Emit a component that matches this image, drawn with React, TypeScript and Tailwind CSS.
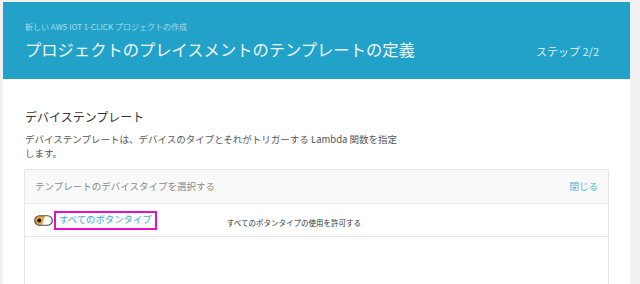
import * as React from "react";

const Toggle: React.FC = () => (
  <svg width="19" height="11" viewBox="0 0 19 11" className="shrink-0">
    <path d="M5.5 1 H11 L8 10 H5.5 A4.5 4.5 0 0 1 5.5 1 Z" fill="#f0a234" />
    <rect x="0.75" y="0.75" width="17.5" height="9.5" rx="4.75" fill="none" stroke="#4a4a4a" strokeWidth="1.2" />
    <circle cx="5.2" cy="5.5" r="2" fill="#111" />
  </svg>
);

export default function App() {
  return (
    <div
      className="w-[640px] h-[284px] overflow-hidden bg-[#f1f1f1] pt-[2px] pl-[3px]"
      style={{ fontFamily: '"Noto Sans CJK JP", "Noto Sans", sans-serif' }}
    >
      <div className="w-[627px] h-[282px] bg-white flex flex-col">
        {/* header */}
        <div className="h-[77px] bg-[#22a2c8] pl-[22px] pr-[31px] pt-[19px] shrink-0">
          <div className="text-[8px] leading-[12px] text-[#a9dcec]">
            新しい AWS IOT 1-CLICK プロジェクトの作成
          </div>
          <div className="mt-[5px] flex items-baseline justify-between">
            <h1 className="text-[16.3px] leading-[22px] text-[#eef8fb] font-normal">
              プロジェクトのプレイスメントのテンプレートの定義
            </h1>
            <span className="text-[11px] leading-[16px] text-[#dff1f7]">ステップ 2/2</span>
          </div>
        </div>

        {/* body */}
        <div className="flex-1 px-[21px] pt-[30px] flex flex-col">
          <h2 className="text-[12px] leading-[16px] text-[#333] pl-[1px]">デバイステンプレート</h2>
          <p className="mt-[7px] text-[9.5px] leading-[14px] text-[#555] pl-[1px]">
            デバイステンプレートは、デバイスのタイプとそれがトリガーする Lambda 関数を指定
            <br />
            します。
          </p>

          <div className="mt-[9px] flex-1 border border-b-0 border-[#e6e6e6] rounded-t-[2px] flex flex-col">
            <div className="h-[34px] bg-[#f9f9f9] flex items-center justify-between pl-[10px] pr-[10px] border-b border-[#ececec]">
              <span className="text-[9.5px] text-[#8a8a8a]">テンプレートのデバイスタイプを選択する</span>
              <span className="text-[9.5px] text-[#4db3d9]">閉じる</span>
            </div>
            <div className="h-[33px] flex items-center pl-[9px] border-b border-[#e6e6e6]">
              <Toggle />
              <div className="ml-[1px] h-[19px] border-2 border-[#e312c6] flex items-center px-[3px]">
                <span className="text-[9.4px] text-[#3fa9d4] leading-none">すべてのボタンタイプ</span>
              </div>
              <span className="ml-[70px] mt-[6px] text-[7.5px] text-[#333]">
                すべてのボタンタイプの使用を許可する
              </span>
            </div>
          </div>
        </div>
      </div>
    </div>
  );
}
